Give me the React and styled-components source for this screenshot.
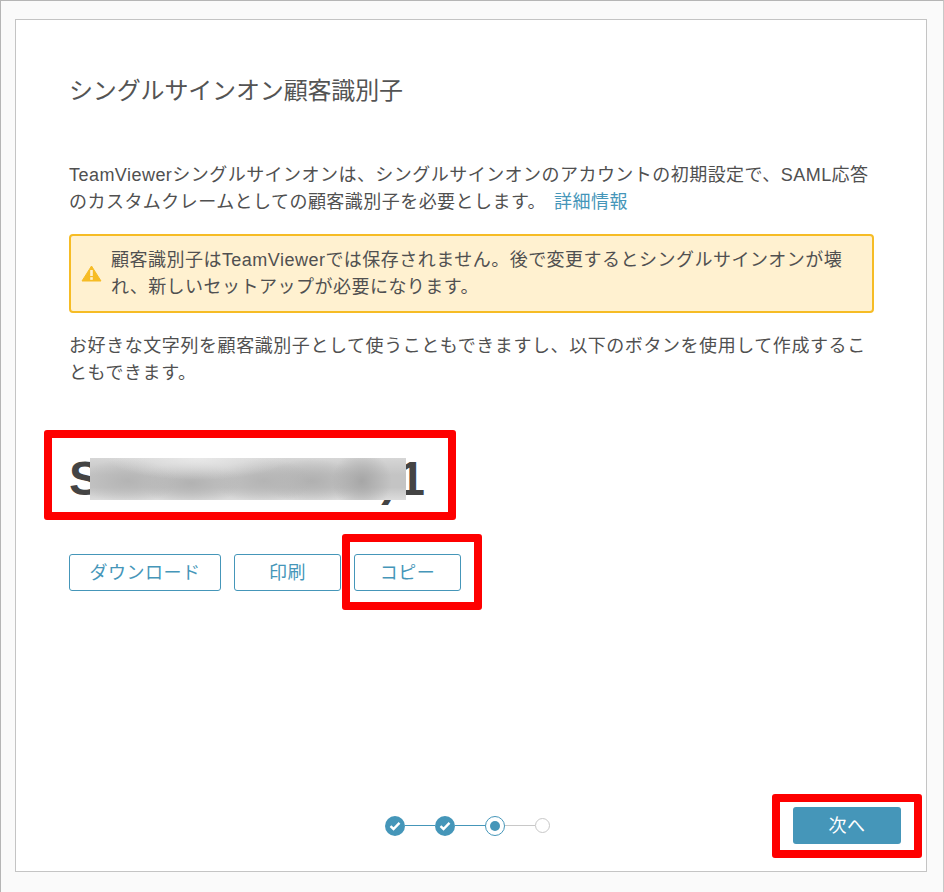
import styled, { createGlobalStyle } from 'styled-components';

const GlobalStyle = createGlobalStyle`
  html, body {
    margin: 0;
    padding: 0;
    background: #fafafa;
  }
  * {
    box-sizing: border-box;
  }
`;

const Page = styled.div`
  width: 944px;
  height: 892px;
  padding: 18px 16px 20px 15px;
  background: #fafafa;
  border: 1px solid #b5b5b5;
  border-bottom: 0;
  border-right-color: #c8c8c8;
  font-family: "Liberation Sans", "Noto Sans CJK JP", sans-serif;
  color: #505050;
`;

const Card = styled.div`
  height: 100%;
  display: flex;
  flex-direction: column;
  padding: 53px 25px 27px 53px;
  margin-left: -1px;
  background: #fff;
  border: 1px solid #c4c4c4;
`;

const Title = styled.h1`
  margin: 0 0 53px;
  font-size: 24px;
  line-height: 36px;
  font-weight: 400;
  letter-spacing: -0.15px;
  color: #545454;
`;

const Text = styled.p`
  margin: 0;
  width: 804px;
  font-size: 18px;
  line-height: 27px;
  letter-spacing: ${(p) => p.$tracking}px;
`;

const Link = styled.a`
  margin-left: 8px;
  color: #4596b9;
`;

const Warning = styled.div`
  display: flex;
  align-items: center;
  gap: 9px;
  width: 805px;
  height: 79px;
  margin: 18px 0 20px;
  padding: 0 20px 0 10px;
  background: #fff1d0;
  border: 2px solid #f6bc25;
  border-radius: 4px;
  font-size: 18px;
  line-height: 27px;
  letter-spacing: 0.48px;

  svg {
    flex-shrink: 0;
  }
`;

const Code = styled.div`
  position: relative;
  margin-top: 63px;
  height: 58px;
  font-size: 48px;
  line-height: 58px;
  font-weight: 700;
  letter-spacing: 1.2px;
  color: #444;
  white-space: nowrap;
`;

const Blur = styled.div`
  position: absolute;
  left: 21px;
  top: 8px;
  width: 316px;
  height: 42px;
  background:
    radial-gradient(ellipse 90px 22px at 34% 0%, #e8e8e8 0, transparent 100%),
    radial-gradient(circle 30px at 86% 55%, #a6a6a6 0, transparent 100%),
    radial-gradient(ellipse 50px 22px at 12% 55%, #b4b4b4 0, transparent 100%),
    radial-gradient(ellipse 50px 22px at 32% 60%, #b2b2b2 0, transparent 100%),
    radial-gradient(ellipse 50px 22px at 55% 55%, #b4b4b4 0, transparent 100%),
    radial-gradient(ellipse 50px 22px at 70% 55%, #b0b0b0 0, transparent 100%),
    linear-gradient(#d6d6d6, #c4c4c4 40%, #c4c4c4 70%, #dcdcdc);
`;

const Highlight = styled.div`
  position: absolute;
  top: ${(p) => p.$top}px;
  left: ${(p) => p.$left}px;
  right: ${(p) => p.$right}px;
  bottom: ${(p) => p.$bottom}px;
  border: 8px solid #fe0000;
  border-radius: 3px;
  pointer-events: none;
`;

const Actions = styled.div`
  display: flex;
  gap: 13px;
  margin-top: 46px;
`;

const OutlineButton = styled.button`
  position: relative;
  width: ${(p) => p.$width}px;
  height: 37px;
  padding: 0 0 3px;
  background: #fff;
  border: 1px solid #4596b9;
  border-radius: 3px;
  color: #4596b9;
  font: inherit;
  font-size: 18px;
  letter-spacing: 0.46px;
`;

const Footer = styled.div`
  display: flex;
  align-items: center;
  margin-top: auto;
`;

const Steps = styled.div`
  display: flex;
  align-items: center;
  margin-left: 316px;
`;

const Dot = styled.span`
  display: flex;
  align-items: center;
  justify-content: center;
  width: ${(p) => (p.$state === 'todo' ? 15 : 20)}px;
  height: ${(p) => (p.$state === 'todo' ? 15 : 20)}px;
  border-radius: 50%;
  background: ${(p) => (p.$state === 'done' ? '#4596b9' : '#fff')};
  border: ${(p) =>
    p.$state === 'current' ? '1px solid #4596b9' : p.$state === 'todo' ? '1px solid #c8c8c8' : '0'};
`;

const Inner = styled.span`
  width: 10px;
  height: 10px;
  border-radius: 50%;
  background: #4596b9;
`;

const Line = styled.span`
  width: 30px;
  height: 1px;
  background: ${(p) => (p.$grey ? '#c8c8c8' : '#4596b9')};
`;

const NextButton = styled.button`
  position: relative;
  width: 108px;
  height: 37px;
  margin-left: auto;
  padding: 0 0 4px;
  background: #4596b9;
  border: 0;
  border-radius: 3px;
  color: #fff;
  font: inherit;
  font-size: 18px;
  letter-spacing: 0.46px;
`;

function WarningIcon() {
  return (
    <svg width="21" height="17" viewBox="0 0 21 17">
      <path d="M10.5 1 L20 16 H1 Z" fill="#f6bc25" stroke="#f6bc25" strokeLinejoin="round" />
      <rect x="9.2" y="5" width="2.6" height="6" fill="#fff1d0" />
      <rect x="9.2" y="12.2" width="2.6" height="2.6" fill="#fff1d0" />
    </svg>
  );
}

function Check() {
  return (
    <svg width="12" height="10" viewBox="0 0 12 10">
      <path d="M1.5 5.2 L4.5 8 L10.5 1.8" fill="none" stroke="#fff" strokeWidth="2.4" />
    </svg>
  );
}

export default function App() {
  return (
    <Page>
      <GlobalStyle />
      <Card>
        <Title>シングルサインオン顧客識別子</Title>
        <Text $tracking={0.46}>
          TeamViewerシングルサインオンは、シングルサインオンのアカウントの初期設定で、SAML応答のカスタムクレームとしての顧客識別子を必要とします。
          <Link>詳細情報</Link>
        </Text>
        <Warning>
          <WarningIcon />
          <span>
            顧客識別子はTeamViewerでは保存されません。後で変更するとシングルサインオンが壊れ、新しいセットアップが必要になります。
          </span>
        </Warning>
        <Text $tracking={0.57}>
          お好きな文字列を顧客識別子として使うこともできますし、以下のボタンを使用して作成することもできます。
        </Text>
        <Code>
          S0000000000)1
          <Blur />
          <Highlight $top={-20} $left={-25} $right={445} $bottom={-12} />
        </Code>
        <Actions>
          <OutlineButton $width={152}>ダウンロード</OutlineButton>
          <OutlineButton $width={107}>印刷</OutlineButton>
          <OutlineButton $width={107}>
            コピー
            <Highlight $top={-21} $left={-13} $right={-22} $bottom={-20} />
          </OutlineButton>
        </Actions>
        <Footer>
          <Steps>
            <Dot $state="done"><Check /></Dot>
            <Line />
            <Dot $state="done"><Check /></Dot>
            <Line />
            <Dot $state="current"><Inner /></Dot>
            <Line $grey />
            <Dot $state="todo" />
          </Steps>
          <NextButton>
            次へ
            <Highlight $top={-13} $left={-21} $right={-21} $bottom={-14} />
          </NextButton>
        </Footer>
      </Card>
    </Page>
  );
}
